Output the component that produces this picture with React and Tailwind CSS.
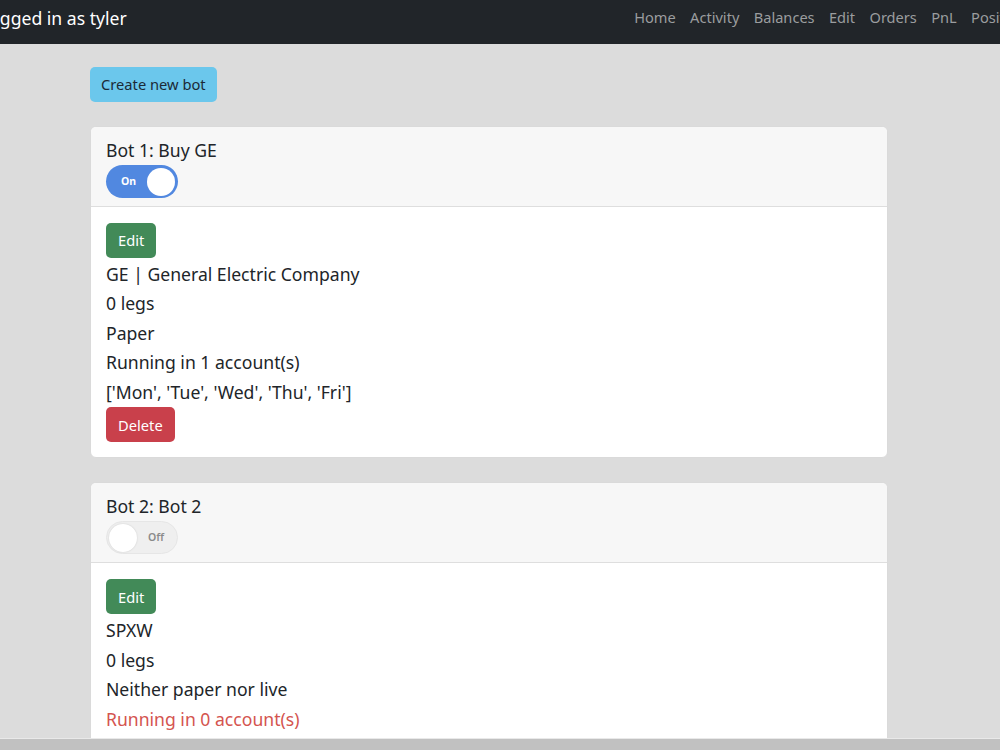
import React from "react"

const navLinks = ["Home", "Activity", "Balances", "Edit", "Orders", "PnL", "Positions"]

const bots = [
  {
    title: "Bot 1: Buy GE",
    on: true,
    lines: [
      { text: "GE | General Electric Company" },
      { text: "0 legs" },
      { text: "Paper" },
      { text: "Running in 1 account(s)" },
      { text: "['Mon', 'Tue', 'Wed', 'Thu', 'Fri']" },
    ],
    deletable: true,
  },
  {
    title: "Bot 2: Bot 2",
    on: false,
    lines: [
      { text: "SPXW" },
      { text: "0 legs" },
      { text: "Neither paper nor live" },
      { text: "Running in 0 account(s)", danger: true },
      { text: "['Mon', 'Tue', 'Wed', 'Thu', 'Fri']" },
    ],
    deletable: true,
  },
]

function Toggle({ on }) {
  if (on) {
    return (
      <div className="w-[72px] h-[33px] rounded-full bg-[#5188e0] flex items-center justify-between pl-[15px] pr-[3px]">
        <span className="text-white text-[10.5px] font-bold">On</span>
        <span className="w-[28px] h-[28px] rounded-full bg-white"></span>
      </div>
    )
  }
  return (
    <div className="w-[72px] h-[33px] rounded-full bg-[#efefef] border border-[#e6e6e6] flex items-center justify-between pl-[2px] pr-[13px]">
      <span className="w-[28px] h-[28px] rounded-full bg-white shadow-[0_0_2px_rgba(0,0,0,0.15)]"></span>
      <span className="text-[#8a8a8a] text-[10.5px] font-semibold">Off</span>
    </div>
  )
}

function BotCard({ bot }) {
  return (
    <div className="bg-white rounded-[6px] border border-[#dadada] overflow-hidden">
      <div className="bg-[#f7f7f7] border-b border-[#dedede] px-[15px] pt-[9px] pb-[8px]">
        <div className="text-[17.6px] leading-[29px] text-[#212529]">{bot.title}</div>
        <Toggle on={bot.on} />
      </div>
      <div className="px-[15px] pt-[16px] pb-[15px]">
        <button className="h-[35px] px-[12px] rounded-[5px] bg-[#428a58] text-white text-[14.7px]">Edit</button>
        <div className="pt-[1.5px]">
          {bot.lines.map((l, i) => (
            <div
              key={i}
              className={`text-[17.6px] leading-[29.6px] ${l.danger ? "text-[#d4544f]" : "text-[#212529]"}`}
            >
              {l.text}
            </div>
          ))}
        </div>
        {bot.deletable && (
          <button className="h-[35px] px-[12px] rounded-[5px] bg-[#c9404b] text-white text-[14.7px]">Delete</button>
        )}
      </div>
    </div>
  )
}

export default function App() {
  return (
    <div className="h-[750px] w-[1000px] overflow-hidden flex flex-col bg-[#dcdcdc] font-['Noto_Sans',sans-serif]">
      {/* Navbar */}
      <nav className="h-[44px] shrink-0 bg-[#212529] flex items-center pb-[8px] overflow-hidden">
        <span className="-ml-[20px] w-[647px] shrink-0 text-white text-[17.6px] whitespace-nowrap">Logged in as tyler</span>
        <ul className="flex items-center shrink-0">
          {navLinks.map(link => (
            <li key={link} className="px-[7.2px] text-[14.6px] text-[#9b9d9f] whitespace-nowrap">{link}</li>
          ))}
        </ul>
      </nav>

      {/* Main */}
      <main className="flex-1 overflow-hidden">
        <div className="ml-[90px] w-[798px] pt-[23px] flex flex-col gap-[24px]">
          <div>
            <button className="h-[35px] px-[11px] rounded-[5px] bg-[#6bc7ec] text-[#1c2a36] text-[14.7px]">Create new bot</button>
          </div>
          {bots.map(bot => (
            <BotCard key={bot.title} bot={bot} />
          ))}
        </div>
      </main>

      {/* Horizontal scrollbar */}
      <div className="h-[12px] shrink-0 bg-[#c1c1c1] border-t border-[#e9e9e9]"></div>
    </div>
  )
}
